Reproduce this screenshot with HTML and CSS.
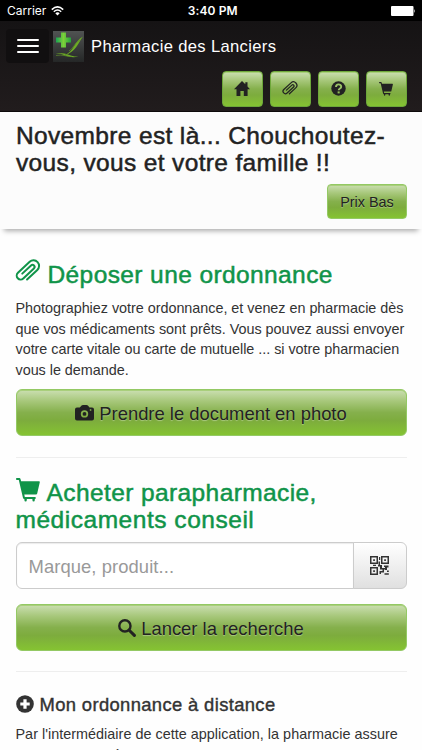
FILE: index.html
```html
<!DOCTYPE html>
<html lang="fr">
<head>
<meta charset="utf-8">
<title>Pharmacie des Lanciers</title>
<link rel="stylesheet" href="styles.css">
</head>
<body>
<svg class="defs" width="0" height="0">
  <symbol id="clip" viewBox="0 0 26 24">
    <path transform="translate(13 12) rotate(47)" d="M5.6 6.5 V-7.5 A5.6 5.6 0 0 0 -5.6 -7.5 V8.5 A3.9 3.9 0 0 0 2.2 8.5 V-6 A2.1 2.1 0 0 0 -2 -6 V6" fill="none" stroke="currentColor" stroke-width="2" stroke-linecap="round"/>
  </symbol>
  <symbol id="cart" viewBox="0 0 24 24">
    <path d="M0 .8 Q0 0 .8 0 H3.4 Q4.2 0 4.5 .9 L5.1 3.2 H23 Q24 3.2 23.8 4.2 L21.2 15.4 Q21 16.4 20 16.4 H8.3 L8.8 19 H19 Q19.8 19 19.8 19.8 Q19.8 21 19 21 H18.8 V22 Q18.8 23.6 17.6 23.6 Q16.4 23.6 16.4 22 V21 H10.8 V22 Q10.8 23.6 9.6 23.6 Q8.4 23.6 8.4 22 V21 Q7.2 21 7 19.9 L2.8 2 H.8 Q0 2 0 .8Z" fill="currentColor"/>
  </symbol>
</svg>
<div class="status">
  <span class="carrier">Carrier</span>
  <svg class="wifi" viewBox="0 0 13 10"><path d="M.8 3.6 Q6.5 -1.8 12.2 3.6 M2.8 5.7 Q6.5 2.4 10.2 5.7" fill="none" stroke="#fff" stroke-width="1.5"/><path d="M4.3 7.2 Q6.5 5.3 8.7 7.2 L6.5 9.5Z" fill="#fff"/></svg>
  <span class="time">3:40 PM</span>
  <svg class="battery" viewBox="0 0 25 10"><rect width="22.5" height="10" rx="1" fill="#fff"/><path d="M23.3 3 Q24.8 5 23.3 7Z" fill="#fff"/></svg>
</div>
<header class="header">
  <div class="brand">
    <button class="menu"><i></i><i></i><i></i></button>
    <svg class="logo" viewBox="0 0 31 31">
      <defs>
        <linearGradient id="lg" x1="0" y1="0" x2="0" y2="1"><stop offset="0" stop-color="#505352"/><stop offset="1" stop-color="#252727"/></linearGradient>
        <linearGradient id="cr" x1="0" y1="0" x2="1" y2="0"><stop offset="0" stop-color="#1aa552"/><stop offset=".5" stop-color="#7ed03a"/><stop offset="1" stop-color="#1fa53c"/></linearGradient>
      </defs>
      <rect width="31" height="31" fill="url(#lg)"/>
      <path d="M8 1.5h5v5h5v5h-5v5H8v-5H3v-5h5z" fill="url(#cr)"/>
      <path d="M1.5 22.5 C9 21 15 28.5 25.5 25.5 C18 26.5 13 20.5 1.5 22.5Z M11 24.5 C21 21 21 10 30 5.5 C25 12 23 21 11 24.5Z" fill="#6dac25"/>
      <path d="M3 24.5 C10 23 14 26 19 25.5 M16 20 C20 18 22 11 27 9" fill="none" stroke="#5d8b29" stroke-width=".7"/>
    </svg>
    <span class="name">Pharmacie des Lanciers</span>
  </div>
  <nav class="nav">
    <button class="btn tool"><svg width="16" height="16" viewBox="0 0 16 16"><path d="M8 0 L11.3 3.3 V1.3 H13.5 V5.5 L16 8.2 H13.6 V15 H9.8 V10 H6.4 V15 H2.5 V8.2 H0Z" fill="currentColor"/></svg></button>
    <button class="btn tool"><svg width="16" height="15"><use href="#clip"/></svg></button>
    <button class="btn tool"><svg width="15" height="15" viewBox="0 0 15 15"><circle cx="7.5" cy="7.5" r="7.2" fill="currentColor"/><path d="M5 6 C5 2.5 10.2 2.7 10.2 5.7 C10.2 7.6 7.7 7.4 7.7 9.2" fill="none" stroke="#9bc467" stroke-width="1.9"/><rect x="6.6" y="10.4" width="2.1" height="2" fill="#8fbb55"/></svg></button>
    <button class="btn tool"><svg width="14" height="14"><use href="#cart"/></svg></button>
  </nav>
</header>
<section class="promo">
  <h1>Novembre est là... Chouchoutez-<br>vous, vous et votre famille !!</h1>
  <button class="btn small">Prix Bas</button>
</section>
<main class="content">
  <section class="deposit">
    <h2><svg class="h-clip"><use href="#clip"/></svg>Déposer une ordonnance</h2>
    <p>Photographiez votre ordonnance, et venez en pharmacie dès<br>que vos médicaments sont prêts. Vous pouvez aussi envoyer<br>votre carte vitale ou carte de mutuelle ... si votre pharmacien<br>vous le demande.</p>
    <button class="btn large"><svg width="19" height="16" viewBox="0 0 19 16"><path fill-rule="evenodd" d="M2 2.5 H4.8 L6.6 .6 Q7 0 8 0 H11.5 Q12.4 0 12.9 .6 L14.5 2.5 H17 Q19 2.5 19 4.5 V13.5 Q19 15.5 17 15.5 H2 Q0 15.5 0 13.5 V4.5 Q0 2.5 2 2.5Z M9.5 5.2 A3.7 3.7 0 1 0 9.5 12.6 A3.7 3.7 0 1 0 9.5 5.2Z M14.8 4.3 V5.7 H16.3 V4.3Z" fill="currentColor"/><circle cx="9.5" cy="8.9" r="1.9" fill="currentColor"/></svg><span>Prendre le document en photo</span></button>
  </section>
  <hr>
  <section class="shop">
    <h2><svg class="h-cart"><use href="#cart"/></svg>Acheter parapharmacie,<br><span class="wide">médicaments conseil</span></h2>
    <div class="search">
      <input type="text" placeholder="Marque, produit...">
      <button class="scan"><svg width="19" height="19" viewBox="0 0 19 19" fill="currentColor"><path fill-rule="evenodd" d="M0 0h8v8H0z M1.5 1.5v5h5v-5z M11 0h8v8h-8z M12.5 1.5v5h5v-5z M0 11h8v8H0z M1.5 12.5v5h5v-5z"/><path d="M3.2 3.2h1.7v1.7H3.2z M14.2 3.2h1.7v1.7h-1.7z M3.2 14.2h1.7v1.7H3.2z M9 1h1.2v3H9z M8.5 5.5H10V9H8.5z M3 8.8h3v1.2H3z M8 9h4v1.5H8z M10 10.5h2v3h-2z M12 12h3v1.5h-3z M14 9.5h4.5v2H17V14h-2v-3h-1z M17 14.5h1.8V16H17z M9.5 15h3v1.5H11V18H9.5z M12.5 13.5H14v3h-1.5z M14.5 17.3h4.3v1.5h-4.3z"/></svg></button>
    </div>
    <button class="btn large find"><svg width="18" height="18" viewBox="0 0 18 18"><circle cx="6.9" cy="6.9" r="5.6" fill="none" stroke="currentColor" stroke-width="2.4"/><path d="M11.2 11.2 L16.4 16.4" stroke="currentColor" stroke-width="3" stroke-linecap="round"/></svg><span>Lancer la recherche</span></button>
  </section>
  <hr>
  <section class="remote">
    <h3><svg width="18" height="18" viewBox="0 0 18 18"><circle cx="9" cy="9" r="8.8" fill="currentColor"/><path d="M9 4.3v9.4M4.3 9h9.4" stroke="#fff" stroke-width="3.2"/></svg><span>Mon ordonnance à distance</span></h3>
    <p class="last">Par l'intermédiaire de cette application, la pharmacie assure<br><span class="cut">é</span></p>
  </section>
</main>
</body>
</html>
```
FILE: styles.css
```css
* { box-sizing: border-box; }
html, body { margin: 0; }
body {
  width: 422px;
  height: 750px;
  overflow: hidden;
  background: #fefefe;
  color: #333;
  font-family: "Liberation Sans", Arial, sans-serif;
  font-size: 14.4px;
}
.defs { display: block; }
button { font-family: inherit; padding: 0; }
.status {
  height: 21px;
  background: #000;
  color: #fff;
  display: grid;
  grid-template-columns: auto 13px 1fr auto;
  align-items: center;
  padding: 0 6px 0 7px;
  font-family: Inter, sans-serif;
  font-size: 12px;
}
.wifi { width: 13px; height: 10px; margin-left: 5px; }
.time { font-weight: 600; justify-self: start; margin-left: 128.5px; letter-spacing: .1px; }
.battery { width: 25px; height: 10px; }
.header {
  height: 91px;
  background: linear-gradient(#151314, #211c1d);
  border-bottom: 1px solid #0d0a0b;
  padding: 8px 15.5px 0 6px;
}
.brand { display: flex; align-items: center; height: 34px; }
.menu {
  width: 43px;
  height: 34px;
  border: 0;
  border-radius: 4px;
  background: #110f10;
  display: flex;
  flex-direction: column;
  align-items: center;
  justify-content: center;
  gap: 4px;
}
.menu i { width: 22px; height: 2px; border-radius: 1px; background: #fff; }
.logo { width: 31px; height: 31px; margin-left: 4px; }
.name { margin: 2px 0 0 7px; color: #fff; font-size: 16.6px; letter-spacing: .33px; white-space: nowrap; }
.nav { display: flex; justify-content: flex-end; gap: 7px; margin-top: 8px; }
.btn {
  display: flex;
  align-items: center;
  justify-content: center;
  border: 1px solid #94c964;
  border-radius: 4px;
  color: #222;
  background: linear-gradient(#cbdfb2 0%, #a8c87c 24%, #85b04c 50%, #7dac3d 68%, #85c332 100%);
  box-shadow: inset 0 1px 0 #a9cf7c;
  text-shadow: 0 1px 1px rgba(255, 255, 255, .35);
  white-space: nowrap;
}
.tool { width: 41px; height: 36px; border-color: #6da73a; padding-bottom: 1px; }
.promo {
  height: 117px;
  background: #fcfcfc;
  padding: 10px 15px 0 16px;
  box-shadow: 0 6px 5px -4px #aaa;
}
h1, h2, h3, p { margin: 0; font-weight: 400; white-space: nowrap; }
h1 { color: #222; font-size: 24.5px; line-height: 27px; letter-spacing: .35px; -webkit-text-stroke: .5px #222; }
.small { width: 80px; height: 35px; margin: 8px 0 0 auto; font-size: 14.4px; }
.content { padding: 31px 15.5px 0; }
h2 { color: #109449; font-size: 24.5px; line-height: 27px; letter-spacing: .4px; -webkit-text-stroke: .5px #109449; }
.wide { letter-spacing: .53px; }
.h-clip { width: 26px; height: 24px; margin: -2px 7px 0 -1px; vertical-align: 0; }
.h-cart { width: 24px; height: 24px; margin: -2px 7px 0 0; vertical-align: -1px; }
p { line-height: 20.5px; letter-spacing: -.03px; }
.deposit { height: 177px; padding-top: 1px; }
.deposit p { margin-top: 10px; }
.large { width: 391px; height: 47px; border-radius: 6px; font-size: 18.4px; gap: 5px; }
.large span { padding-top: 2px; }
.deposit .large { margin-top: 9px; }
hr { height: 1px; margin: 20px 0 21px; border: 0; background: #eee; }
.search { display: flex; height: 47px; margin-top: 9px; width: 391px; }
input {
  flex: 1;
  min-width: 0;
  border: 1px solid #ccc;
  border-radius: 6px 0 0 6px;
  padding: 2px 12px 0;
  font: 18.4px "Liberation Sans", sans-serif;
  letter-spacing: .08px;
  background: #fff;
  box-shadow: inset 0 1px 1px rgba(0, 0, 0, .08);
}
input::placeholder { color: #999; }
.scan {
  width: 54px;
  margin-left: -1px;
  border: 1px solid #ccc;
  border-radius: 0 6px 6px 0;
  background: linear-gradient(#fff, #e0e0e0);
  color: #333;
  display: flex;
  align-items: center;
  justify-content: center;
}
.find { margin-top: 15px; }
.remote { padding-top: 1px; }
h3 { display: flex; align-items: center; gap: 6px; font-size: 18.4px; line-height: 22px; letter-spacing: .36px; -webkit-text-stroke: .4px #333; }
h3 svg { margin-top: -3px; }
.last { margin-top: 8px; letter-spacing: .02px; }
.cut { margin-left: 97px; }
```
